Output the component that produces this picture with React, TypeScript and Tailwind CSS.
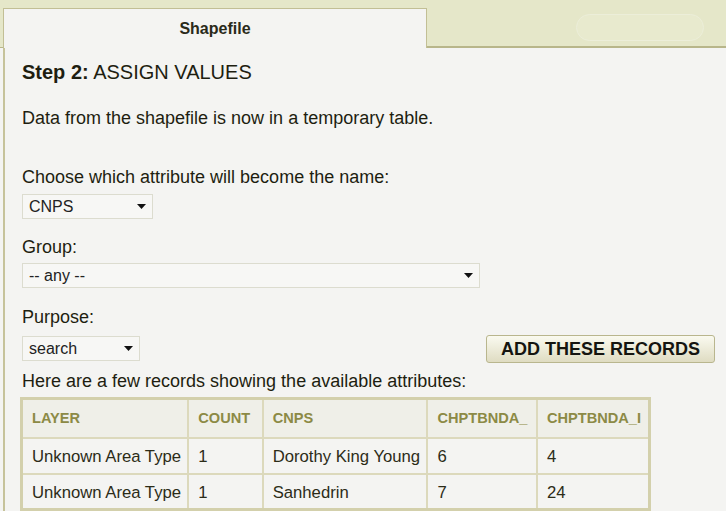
import React from 'react';

const rows = [
  ['Unknown Area Type', '1', 'Dorothy King Young', '6', '4'],
  ['Unknown Area Type', '1', 'Sanhedrin', '7', '24'],
];

const cols = ['LAYER', 'COUNT', 'CNPS', 'CHPTBNDA_', 'CHPTBNDA_I'];
const widths = ['w-[166px]', 'w-[74px]', 'w-[164px]', 'w-[109px]', 'w-[112px]'];

const Caret = () => (
  <svg width="9" height="5" viewBox="0 0 9 5" className="shrink-0">
    <path d="M0 0h9L4.5 5z" fill="#111" />
  </svg>
);

const Select = ({ value, className }: { value: string; className: string }) => (
  <div
    className={`flex items-center justify-between h-[25px] pl-[6px] pr-[6px] bg-[#f7f7f5] border border-[#dcdccf] text-[16px] text-[#222] ${className}`}
  >
    <span>{value}</span>
    <Caret />
  </div>
);

export default function App() {
  return (
    <div
      className="w-[726px] h-[511px] overflow-hidden bg-[#f4f4f2] text-[#1e1e10]"
      style={{ fontFamily: '"Liberation Sans", Arial, sans-serif' }}
    >
      {/* tab strip */}
      <div className="flex h-[48px] bg-[#e5e7c9]">
        <div className="w-[3px] border-b border-[#b8b68a]" />
        <div className="w-[424px] mt-[8px] flex items-center justify-center bg-[#f4f4f2] border-t border-l border-r border-[#c2bf95] text-[16px] font-bold text-[#2a2a1a] pt-[1px]">
          Shapefile
        </div>
        <div className="flex-1 flex items-start justify-end pr-[22px] pt-[14px] border-b-[2px] border-[#b8b68a]">
          <div className="w-[128px] h-[27px] rounded-[14px] border border-[#eceed9] bg-[#e8eace]" />
        </div>
      </div>

      <div className="ml-[3px] border-l-[2px] border-[#c6c39b] h-full pl-[17px] pt-[12px]">
        <div className="text-[20px] leading-[24px]">
          <span className="font-bold">Step 2:</span> ASSIGN VALUES
        </div>
        <p className="mt-[23px] text-[18px] leading-[22px]">
          Data from the shapefile is now in a temporary table.
        </p>
        <p className="mt-[37px] text-[18px] leading-[22px]">
          Choose which attribute will become the name:
        </p>
        <Select value="CNPS" className="mt-[6px] w-[131px]" />
        <p className="mt-[17px] text-[18px] leading-[22px]">Group:</p>
        <Select value="-- any --" className="mt-[5px] w-[458px]" />
        <div className="mt-[18px] flex items-start justify-between pr-[11px]">
          <div>
            <p className="text-[18px] leading-[22px]">Purpose:</p>
            <Select value="search" className="mt-[8px] w-[118px]" />
          </div>
          <button className="mt-[29px] h-[28px] w-[229px] rounded-[3px] border border-[#b9b68e] bg-gradient-to-b from-[#fafaf0] to-[#dfdcc2] text-[18px] font-bold text-[#151510]">
            ADD THESE RECORDS
          </button>
        </div>
        <p className="mt-[7px] text-[18px] leading-[22px]">
          Here are a few records showing the available attributes:
        </p>
        <table className="mt-[5px] -ml-[2px] table-fixed w-[631px] border-collapse border-[3px] border-[#d3d0ac]">
          <thead>
            <tr className="bg-[#efefe8]">
              {cols.map((c, i) => (
                <th
                  key={c}
                  className={`${widths[i]} h-[39px] border-[2px] border-[#dcd9bc] pl-[9px] pr-0 pt-[2px] text-left text-[14.6px] font-bold text-[#8c8a45] whitespace-nowrap`}
                >
                  {c}
                </th>
              ))}
            </tr>
          </thead>
          <tbody>
            {rows.map((r, ri) => (
              <tr key={ri} className="bg-[#f4f4f2]">
                {r.map((v, i) => (
                  <td
                    key={i}
                    className="h-[36px] border-[2px] border-[#dcd9bc] pl-[9px] pr-0 pt-[2px] text-[16.7px] text-[#2c2c18] whitespace-nowrap"
                  >
                    {v}
                  </td>
                ))}
              </tr>
            ))}
          </tbody>
        </table>
      </div>
    </div>
  );
}
